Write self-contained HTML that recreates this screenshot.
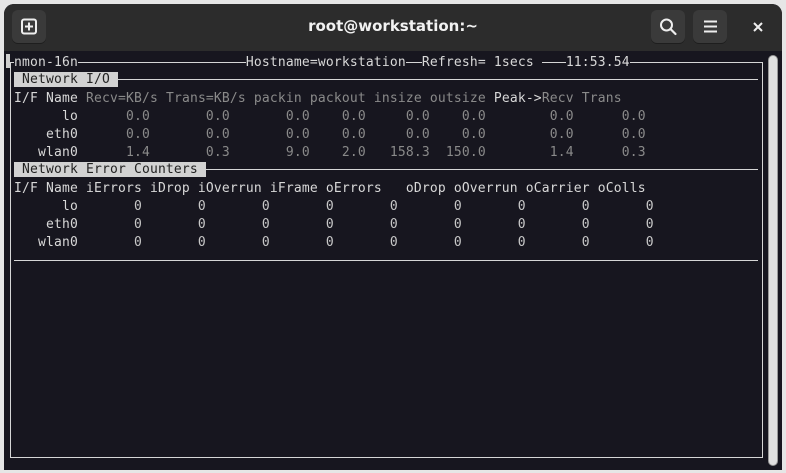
<!DOCTYPE html>
<html><head><meta charset="utf-8"><style>
*{margin:0;padding:0;box-sizing:border-box}
body{width:786px;height:473px;background:#e6e6e6;position:relative;overflow:hidden}
.win{position:absolute;left:4px;top:4px;width:778px;height:466px;background:#17161f;border-radius:10px 10px 0 0;overflow:hidden}
.hdr{position:absolute;left:0;top:0;width:778px;height:47px;background:#2c2c2c}
.btn{position:absolute;top:6px;width:34px;height:33px;background:#3a3a3a;border-radius:6px;box-shadow:0 1px 0 #1e1e1e}
.title{position:absolute;left:0;width:778px;top:13px;text-align:center;color:#f2f2f2;font:bold 15px "DejaVu Sans","Liberation Sans",sans-serif}
.t{position:absolute;left:14px;font:13px "DejaVu Sans Mono","Liberation Mono",monospace;letter-spacing:0.17px;white-space:pre;color:#d8d8d8;line-height:18px;height:18px}
.d{color:#8a8a8a}
.z{color:#c8c8c8}
.bg{background:#17161f}
.hl{background:#d2d2d2;color:#222}
.ln{position:absolute;height:1px;background:#d6d6d6}
.vl{position:absolute;width:1px;background:#d6d6d6}
</style></head><body>
<div class="win">
 <div class="hdr">
  <div class="btn" style="left:8px"><svg width="34" height="33"><rect x="10" y="9.5" width="14" height="14" rx="2" fill="none" stroke="#eee" stroke-width="2"/><path d="M17 12.5v8M13 16.5h8" stroke="#eee" stroke-width="2"/></svg></div>
  <div class="title">root@workstation:~</div>
  <div class="btn" style="left:647px"><svg width="34" height="33"><circle cx="15.5" cy="15" r="5.5" fill="none" stroke="#eee" stroke-width="2"/><path d="M19.5 19l5 5" stroke="#eee" stroke-width="2.2" stroke-linecap="round"/></svg></div>
  <div class="btn" style="left:689px"><svg width="34" height="33"><path d="M11 11.5h13M11 16.5h13M11 21.5h13" stroke="#eee" stroke-width="2"/></svg></div>
  <svg style="position:absolute;left:748px;top:17px" width="12" height="12"><path d="M2 2l8 8M10 2l-8 8" stroke="#eee" stroke-width="2"/></svg>
 </div>
 <div style="position:absolute;left:764px;top:51px;width:10px;height:411px;background:#e0e0e0;border-radius:5px;border:1px solid #999"></div>
</div>
<div class="ln" style="left:10px;top:62px;width:753px"></div>
<div class="vl" style="left:10px;top:62px;height:396px"></div>
<div class="vl" style="left:762px;top:62px;height:396px"></div>
<div class="ln" style="left:10px;top:457px;width:753px"></div>
<div style="position:absolute;left:6px;top:54px;width:4px;height:14px;background:#cfcfcf"></div>
<div class="ln" style="left:118px;top:79px;width:640px"></div>
<div class="ln" style="left:206px;top:169px;width:552px"></div>
<div class="ln" style="left:14px;top:260px;width:744px"></div>

<div class="t" style="top:54px"><span class="bg">nmon-16n</span>                     <span class="bg">Hostname=workstation</span>  <span class="bg">Refresh= 1secs </span>   <span class="bg">11:53.54</span></div>
<div class="t" style="top:71px"><span class="hl"> Network I/O </span></div>
<div class="t" style="top:90px">I/F Name <span class="d">Recv=KB/s Trans=KB/s packin packout insize outsize </span>Peak-&gt;<span class="d">Recv Trans</span></div>
<div class="t" style="top:108px">      lo<span class="d">      0.0       0.0       0.0    0.0     0.0    0.0        0.0      0.0</span></div>
<div class="t" style="top:126px">    eth0<span class="d">      0.0       0.0       0.0    0.0     0.0    0.0        0.0      0.0</span></div>
<div class="t" style="top:144px">   wlan0<span class="d">      1.4       0.3       9.0    2.0   158.3  150.0        1.4      0.3</span></div>
<div class="t" style="top:161px"><span class="hl"> Network Error Counters </span></div>
<div class="t" style="top:180px">I/F Name iErrors iDrop iOverrun iFrame oErrors   oDrop oOverrun oCarrier oColls</div>
<div class="t" style="top:198px">      lo<span class="z">       0       0       0       0       0       0       0       0       0</span></div>
<div class="t" style="top:216px">    eth0<span class="z">       0       0       0       0       0       0       0       0       0</span></div>
<div class="t" style="top:234px">   wlan0<span class="z">       0       0       0       0       0       0       0       0       0</span></div>
</body></html>
